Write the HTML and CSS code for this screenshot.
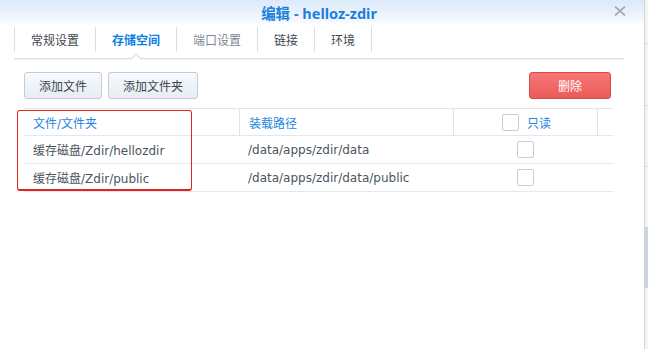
FILE: index.html
```html
<!DOCTYPE html>
<html lang="zh-CN">
<head>
<meta charset="utf-8">
<link rel="stylesheet" href="styles.css">
</head>
<body>
<div class="screen">
  <div class="window">
    <div class="titlebar">
      <span class="title">编辑 - helloz-zdir</span>
      <span class="close">
        <svg width="12" height="10" viewBox="0 0 12 10"><path d="M1 0.5 L11 9.5 M11 0.5 L1 9.5" stroke="#a4acb4" stroke-width="1.8" fill="none"/></svg>
      </span>
    </div>
    <div class="tabbar">
      <div class="tab">常规设置</div>
      <div class="tab active">存储空间</div>
      <div class="tab disabled">端口设置</div>
      <div class="tab">链接</div>
      <div class="tab">环境</div>
    </div>
    <div class="toolbar">
      <div class="btn-group">
        <button class="btn">添加文件</button>
        <button class="btn">添加文件夹</button>
      </div>
      <button class="btn btn-danger">删除</button>
    </div>
    <div class="table-wrap">
      <div class="table">
        <div class="row head">
          <div class="cell">文件/文件夹</div>
          <div class="cell">装载路径</div>
          <div class="cell center"><span class="check"></span><span class="ro">只读</span></div>
          <div class="cell"></div>
        </div>
        <div class="row">
          <div class="cell">缓存磁盘/Zdir/hellozdir</div>
          <div class="cell">/data/apps/zdir/data</div>
          <div class="cell center"><span class="check"></span></div>
          <div class="cell"></div>
        </div>
        <div class="row">
          <div class="cell">缓存磁盘/Zdir/public</div>
          <div class="cell">/data/apps/zdir/data/public</div>
          <div class="cell center"><span class="check"></span></div>
          <div class="cell"></div>
        </div>
      </div>
      <div class="highlight"></div>
    </div>
  </div>
  <div class="edge">
    <div class="edge-line l1"></div>
    <div class="edge-line l2"></div>
    <div class="edge-line l3"></div>
    <div class="edge-thumb"></div>
  </div>
</div>
</body>
</html>
```
FILE: styles.css
```css
* { box-sizing: border-box; }
html, body { margin: 0; padding: 0; }
body {
  width: 648px;
  height: 349px;
  overflow: hidden;
  font-family: "DejaVu Sans", "Noto Sans CJK SC", sans-serif;
  font-size: 12px;
  color: #4a545e;
  background: #fff;
}
.screen { display: flex; height: 349px; }
.window {
  width: 645px;
  height: 349px;
  background: #fff;
  border-right: 1px solid #d2d4d6;
  display: flex;
  flex-direction: column;
}
.titlebar {
  height: 26px;
  display: flex;
  align-items: center;
  justify-content: center;
  position: relative;
  background: linear-gradient(#dbe9f8, #f4f9fe 80%, #ffffff);
}
.title {
  font-family: "Noto Sans", "Noto Sans CJK SC", sans-serif;
  font-weight: bold;
  font-size: 14.5px;
  color: #1b7fdc;
  margin-left: -6px;
  line-height: 16px;
}
.close {
  position: absolute;
  right: 18px;
  top: 6px;
  width: 12px;
  height: 10px;
  display: flex;
}
.tabbar {
  display: flex;
  margin: 1px 20px 0 14px;
  height: 32px;
  padding-bottom: 6px;
  border-bottom: 1px solid #d9dee4;
  box-shadow: 0 1px 0 #f1f3f5;
}
.tab {
  height: 25px;
  padding: 0 16px;
  display: flex;
  align-items: center;
  border-left: 1px solid #d6dee6;
  color: #3f4750;
  font-size: 12px;
  position: relative;
}
.tab:last-child { border-right: 1px solid #d6dee6; }
.tab.active { color: #0d7fe2; font-weight: bold; }
.tab.disabled { color: #7e8891; }
.tab.active::after {
  content: "";
  position: absolute;
  left: 50%;
  bottom: -11px;
  width: 7px;
  height: 7px;
  margin-left: -4px;
  background: #fff;
  border-left: 1px solid #d9dee4;
  border-top: 1px solid #d9dee4;
  transform: rotate(45deg);
}
.toolbar {
  display: flex;
  justify-content: space-between;
  padding: 0 33px 0 24px;
  margin-top: 13px;
}
.btn-group { display: flex; gap: 6px; }
.btn {
  height: 27px;
  padding: 0;
  font-family: "DejaVu Sans", "Noto Sans CJK SC", sans-serif;
  font-size: 12px;
  color: #3c4650;
  background: linear-gradient(#f7f9fc, #e7edf3);
  border: 1px solid #c4cdd7;
  border-radius: 3px;
}
.btn-group .btn:first-child { width: 78px; }
.btn-group .btn:last-child { width: 90px; }
.btn-danger {
  width: 82px;
  color: #fff;
  background: linear-gradient(#f87676, #ea5b5b);
  border-color: #d64c4c;
}
.table-wrap {
  position: relative;
  margin: 9px 31px 0 24px;
}
.table { border-top: 1px solid #dfe6ed; }
.row {
  display: grid;
  grid-template-columns: 215px 214px 144px 16px;
  height: 28px;
  border-bottom: 1px solid #e2e8ee;
}
.row.head { height: 27px; }
.cell {
  display: flex;
  align-items: center;
  padding-left: 9px;
  white-space: nowrap;
}
.head .cell { color: #2686e2; }
.head .cell + .cell { border-left: 1px solid #dde4eb; }
.cell.center { justify-content: center; padding-left: 0; }
.check {
  width: 17px;
  height: 17px;
  border: 1px solid #c6cfd8;
  border-radius: 2px;
  background: #fff;
}
.ro { margin-left: 8px; }
.head .cell.center { padding-left: 2px; }
.highlight {
  position: absolute;
  left: -7px;
  top: 2px;
  width: 175px;
  height: 81px;
  border: 1px solid #e6231f;
  border-bottom-width: 2px;
  border-radius: 3px;
  pointer-events: none;
}
.edge {
  width: 3px;
  height: 349px;
  background: #f3f4f5;
  position: relative;
}
.edge-line {
  position: absolute;
  left: 0;
  width: 3px;
  height: 1px;
  background: #dcdcdc;
}
.l1 { top: 43px; }
.l2 { top: 105px; }
.l3 { top: 166px; }
.edge-thumb {
  position: absolute;
  left: 0;
  top: 227px;
  width: 3px;
  height: 61px;
  background: #c9d6e2;
}
```
